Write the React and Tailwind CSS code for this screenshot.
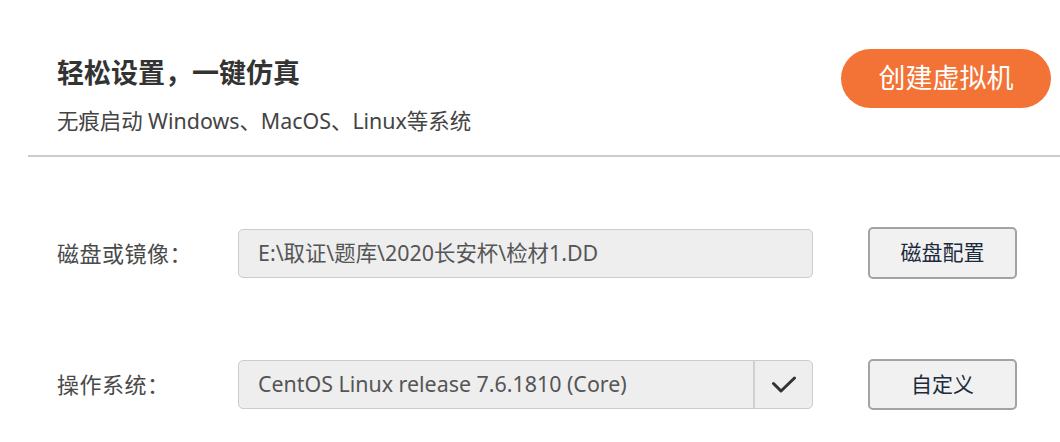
import React from "react";

const FONT = { fontFamily: '"Noto Sans", "Noto Sans CJK SC", sans-serif' };

const CheckIcon = () => (
  <svg width="26" height="18" viewBox="0 0 26 18" fill="none">
    <path d="M2.5 7.5 L10 15 L23.5 2" stroke="#333333" strokeWidth="3" strokeLinecap="round" strokeLinejoin="round" />
  </svg>
);

const SideButton = ({ children, className = "" }) => (
  <button className={`ml-[55px] w-[149px] rounded-[5px] border-2 border-[#a3a3a3] bg-[#f1f1f1] text-[21px] text-[#1c2b3c] ${className}`}>
    {children}
  </button>
);

// Form row: label, read-only field, action button.
const FormRow = ({ label, className, children, button }) => (
  <div className={`flex items-center pl-[57px] ${className}`}>
    <div className="w-[181px] text-[22px] tracking-[0.5px] text-[#4a4a4a]">{label}</div>
    {children}
    {button}
  </div>
);

export default function App() {
  return (
    <div className="h-[442px] w-[1060px] overflow-hidden bg-white" style={FONT}>
      <header className="flex h-[155px] justify-between pl-[57px] pr-[9px]">
        <div className="flex flex-col">
          <h1 className="mt-[53px] h-[40px] text-[27px] font-bold leading-[40px] text-[#333333]">
            轻松设置，一键仿真
          </h1>
          <p className="mt-[13px] h-[30px] text-[21.4px] leading-[30px] text-[#444444]">
            无痕启动 Windows、MacOS、Linux等系统
          </p>
        </div>
        <button className="mt-[49px] h-[59px] w-[210px] rounded-full bg-[#f37236] text-[27px] text-white">
          创建虚拟机
        </button>
      </header>

      <div className="ml-[28px] h-[2px] bg-[#cccccc]" />

      <FormRow
        label="磁盘或镜像："
        className="mt-[70px] h-[52px]"
        button={<SideButton className="h-[52px]">磁盘配置</SideButton>}
      >
        <div className="flex h-[49px] w-[575px] items-center rounded-[5px] border border-[#cccccc] bg-[#eeeeee] pl-[19px] text-[21.4px] text-[#555555]">
          E:\取证\题库\2020长安杯\检材1.DD
        </div>
      </FormRow>

      <FormRow
        label="操作系统："
        className="mt-[80px] h-[51px]"
        button={<SideButton className="h-[51px]">自定义</SideButton>}
      >
        <div className="flex h-[49px] w-[575px] items-center overflow-hidden rounded-[5px] border border-[#cccccc] bg-[#eeeeee] text-[21.4px] text-[#555555]">
          <span className="flex-1 pl-[19px]">CentOS Linux release 7.6.1810 (Core)</span>
          <span className="flex h-full w-[59px] items-center justify-center border-l-2 border-[#d0d0d0]">
            <CheckIcon />
          </span>
        </div>
      </FormRow>
    </div>
  );
}
